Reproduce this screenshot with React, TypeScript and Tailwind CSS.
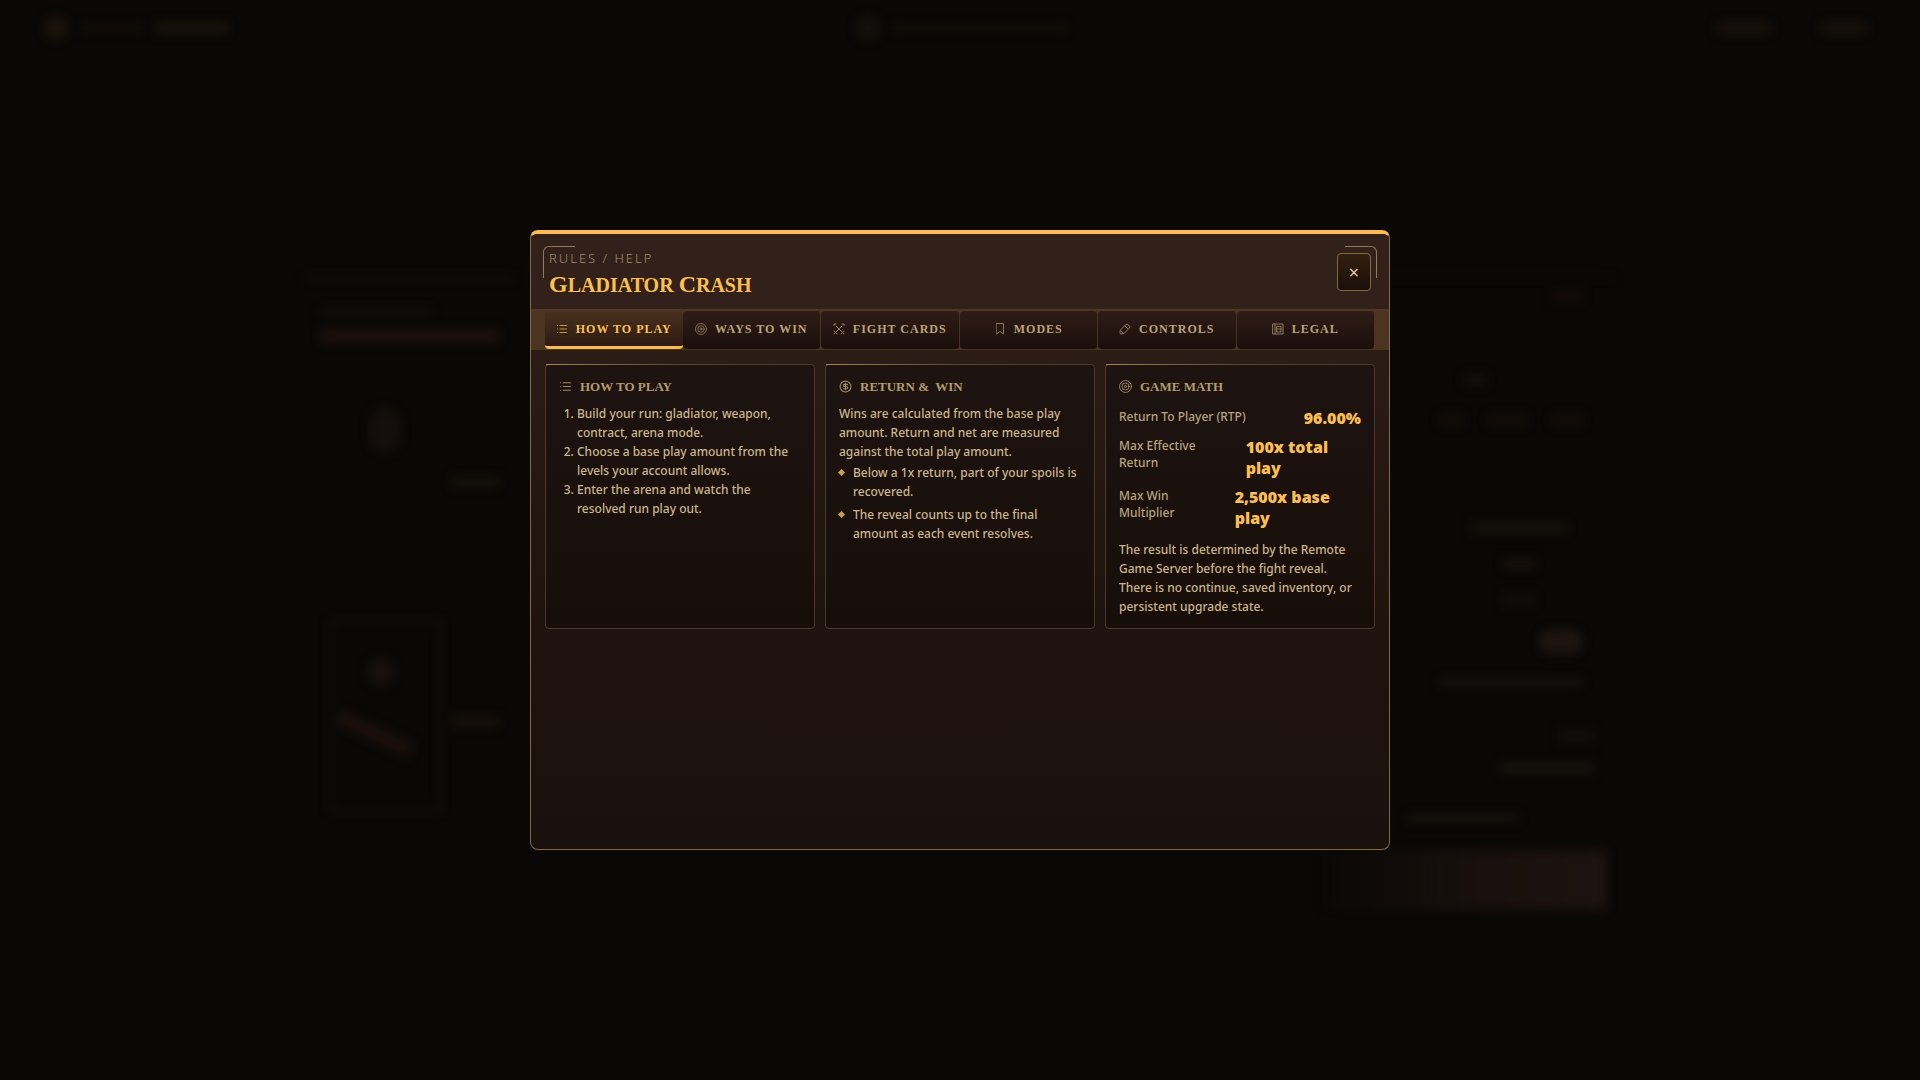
import { type ReactNode, useState } from "react";
import { CircleDollarSign, List } from "lucide-react";
import clsx from "clsx";

type IconProps = { size?: number; strokeWidth?: number; className?: string };
type IconType = (props: IconProps) => ReactNode;

function Glyph({
  size = 14,
  strokeWidth = 2,
  className,
  children,
}: IconProps & { children: ReactNode }) {
  return (
    <svg
      width={size}
      height={size}
      viewBox="0 0 24 24"
      fill="none"
      stroke="currentColor"
      strokeWidth={strokeWidth}
      strokeLinecap="round"
      strokeLinejoin="round"
      className={className}
      aria-hidden="true"
    >
      {children}
    </svg>
  );
}

const ListIcon: IconType = (props) => <List {...props} />;
const CoinIcon: IconType = (props) => <CircleDollarSign {...props} />;

const TargetIcon: IconType = (props) => (
  <Glyph {...props} strokeWidth={1.7}>
    <circle cx="12" cy="12" r="11" />
    <circle cx="12" cy="12" r="6.5" />
    <circle cx="12" cy="12" r="2" />
  </Glyph>
);

const CrossedIcon: IconType = (props) => (
  <Glyph {...props}>
    <path d="M6 6l12 12M18 6L6 18" />
    <path d="M2 5V2h4M18 2h4v3M2 16l6 6M22 16l-6 6M2 22l3-3M22 22l-3-3" />
  </Glyph>
);

const BookmarkIcon: IconType = (props) => (
  <Glyph {...props}>
    <path d="M5 1h14v21l-7-5-7 5z" />
  </Glyph>
);

const PencilIcon: IconType = (props) => (
  <Glyph {...props}>
    <path d="M3 14L13 4l3-2 6 5-2 4L10 21l-7 1-1-3z" />
    <path d="M12 6l6 6M3 15l6 6" />
  </Glyph>
);

const LegalIcon: IconType = (props) => (
  <Glyph {...props}>
    <path d="M2 2h20v20H2zM6 2v20M10 7h8v11h-8zM10 12h8" />
  </Glyph>
);

const TABS: { label: string; icon: IconType }[] = [
  { label: "How to play", icon: ListIcon },
  { label: "Ways to win", icon: TargetIcon },
  { label: "Fight cards", icon: CrossedIcon },
  { label: "Modes", icon: BookmarkIcon },
  { label: "Controls", icon: PencilIcon },
  { label: "Legal", icon: LegalIcon },
];

const MATH = [
  { label: "Return To Player (RTP)", value: "96.00%" },
  { label: "Max Effective Return", value: "100x total play" },
  { label: "Max Win Multiplier", value: "2,500x base play" },
];

const serif = "font-['Liberation_Serif',serif]";

function Panel({
  icon: Icon,
  title,
  children,
}: {
  icon: IconType;
  title: string;
  children: ReactNode;
}) {
  return (
    <section className="relative rounded border border-[#49392a] bg-linear-to-b from-[#1d1310] to-[#170d09] px-[13px] pb-3">
      <span className="absolute inset-x-0 -top-px h-px bg-linear-to-r from-[#a88345] via-[#5a452b] to-transparent" />
      <h2
        className={clsx(
          "flex h-[39px] items-center gap-2 pt-1 text-[13px] font-bold whitespace-pre text-[#b39b6c] uppercase",
          serif,
        )}
      >
        <Icon size={13} strokeWidth={2} className="text-[#a08a62]" />
        {title}
      </h2>
      {children}
    </section>
  );
}

// The game screen that stays dimmed and out of focus behind the dialog.
function Backdrop() {
  return (
    <div aria-hidden="true" className="absolute inset-0 overflow-hidden blur-[5px]">
      <div className="flex h-14 items-center justify-between px-11">
        <div className="flex items-center gap-3">
          <span className="size-6 rounded-full bg-[#1c120a]" />
          <span className="h-2 w-16 bg-[#120d08]" />
          <span className="h-3 w-18 bg-[#1a120a]" />
        </div>
        <div className="flex items-center gap-3 pr-5">
          <span className="size-6 rounded-full bg-[#15100b]" />
          <span className="h-2 w-44 bg-[#110d08]" />
        </div>
        <div className="flex items-center gap-12 pr-2">
          <span className="h-3 w-14 bg-[#17100b]" />
          <span className="h-3 w-12 bg-[#17100b]" />
        </div>
      </div>
      <div className="mx-auto mt-[220px] flex max-w-[1310px] justify-between">
        <div className="w-[210px] border-t-4 border-[#120d08] px-4 pt-7">
          <div className="h-2 w-28 bg-[#130d09]" />
          <div className="mt-3 h-4 w-full bg-[#1a0f0b]" />
          <div className="mt-16 ml-12 h-11 w-8 rounded-full bg-[#140f0c]" />
          <div className="mt-6 ml-auto h-3 w-12 bg-[#15100c]" />
          <div className="mt-33 ml-2 h-48 w-28 border-2 border-[#15120a] pt-9 pl-9">
            <div className="size-7 rounded-full bg-[#17100d]" />
            <div className="mt-10 -ml-8 h-4 w-20 rotate-25 bg-[#1a100c]" />
          </div>
          <div className="-mt-24 ml-auto h-3 w-12 bg-[#17100c]" />
        </div>
        <div className="flex w-[290px] flex-col items-end border-t-2 border-[#0e0b07] pt-3 pr-8">
          <div className="h-3 w-8 bg-[#120a08]" />
          <div className="mt-18 mr-24 h-3 w-6 bg-[#120e0b]" />
          <div className="mt-7 flex gap-6">
            <span className="h-3 w-6 bg-[#120d0a]" />
            <span className="h-3 w-10 bg-[#120d0a]" />
            <span className="h-3 w-8 bg-[#120d0a]" />
          </div>
          <div className="mt-24 mr-4 h-3 w-24 bg-[#14100c]" />
          <div className="mt-6 mr-12 h-3 w-8 bg-[#15100c]" />
          <div className="mt-6 mr-12 h-3 w-8 bg-[#120d0a]" />
          <div className="mt-6 h-6 w-11 rounded-full bg-[#1e1512]" />
          <div className="mt-6 h-2 w-36 bg-[#17110e]" />
          <div className="mt-11 -mr-3 h-3 w-9 bg-[#130e0c]" />
          <div className="mt-5 -mr-3 h-3 w-24 bg-[#15100d]" />
          <div className="mt-10 mr-16 h-2 w-28 bg-[#15100d]" />
          <div className="mt-7 -mr-6 h-15 w-[290px] bg-linear-to-r from-transparent via-[#180f0c] to-[#1d130f]" />
        </div>
      </div>
    </div>
  );
}

export default function App() {
  const [active, setActive] = useState("How to play");

  return (
    <div className="relative min-h-screen overflow-hidden bg-[#090806] font-['Noto_Sans',sans-serif]">
      <Backdrop />
      <div className="relative flex min-h-screen items-center justify-center">
        <div
          role="dialog"
          aria-labelledby="rules-title"
          className="flex min-h-[620px] w-full max-w-[860px] flex-col overflow-hidden rounded-lg border border-t-4 border-[#846a3a] border-t-[#fdbb47] bg-linear-to-b from-[#33211a] via-[#20150f] to-[#1a100d]"
        >
          <header className="relative flex h-[77px] items-start justify-between border-b-2 border-[#4e3823] bg-[#31211a] px-[18px] pt-[14px]">
            <span className="absolute top-3 left-3 size-8 rounded-tl-md border-t border-l border-[#937a50]" />
            <span className="absolute top-3 right-3 size-8 rounded-tr-md border-t border-r border-[#937a50]" />
            <div>
              <p className="text-[13px] leading-5 font-light tracking-[2px] text-[#a38d68] uppercase">
                Rules / Help
              </p>
              <h1
                id="rules-title"
                className={clsx(
                  "flex gap-[5px] text-xl leading-6 font-bold text-[#fdc04e] uppercase",
                  serif,
                )}
              >
                <span className="block first-letter:text-2xl">Gladiator</span>{" "}
                <span className="block first-letter:text-2xl">Crash</span>
              </h1>
            </div>
            <button
              type="button"
              aria-label="Close"
              className="mt-[5px] flex h-[38px] w-[34px] items-center justify-center rounded border border-[#846a3f] bg-linear-to-b from-[#34200f] to-[#1b0f0b] text-lg text-[#e3cfa1]"
            >
              ×
            </button>
          </header>

          <nav className="flex h-[39px] border-b border-[#49341f] bg-[#4b3420] px-[14px]">
            {TABS.map(({ label, icon: Icon }) => (
              <button
                type="button"
                key={label}
                onClick={() => setActive(label)}
                className={clsx(
                  "flex flex-1 items-center justify-center gap-2 rounded-sm text-xs font-bold tracking-[1px] whitespace-nowrap uppercase",
                  serif,
                  active === label
                    ? "border-b-3 border-[#fdbb47] bg-linear-to-b from-[#49311e] to-[#2d1b12] text-[#fdc253]"
                    : "border-r border-[#49341f] bg-linear-to-b from-[#2f1c17] to-[#1b0f0b] pb-[3px] text-[#b9a478]",
                )}
              >
                <Icon size={12} strokeWidth={2} className="opacity-70" />
                {label}
              </button>
            ))}
          </nav>

          <div className="grid grid-cols-3 gap-[10px] px-[14px] pt-[14px] text-xs leading-[19px] font-medium text-[#cbb68c]">
            <Panel icon={ListIcon} title="How to play">
              <ol className="list-decimal pl-[18px]">
                <li>Build your run: gladiator, weapon, contract, arena mode.</li>
                <li>Choose a base play amount from the levels your account allows.</li>
                <li>Enter the arena and watch the resolved run play out.</li>
              </ol>
            </Panel>

            <Panel icon={CoinIcon} title={"Return &  Win"}>
              <p>
                Wins are calculated from the base play amount. Return and net are
                measured against the total play amount.
              </p>
              <ul className="mt-[2px] space-y-1">
                {[
                  "Below a 1x return, part of your spoils is recovered.",
                  "The reveal counts up to the final amount as each event resolves.",
                ].map((text) => (
                  <li key={text} className="flex gap-[9px]">
                    <span className="mt-[7px] size-[5px] shrink-0 rotate-45 bg-[#c99f4e]" />
                    {text}
                  </li>
                ))}
              </ul>
            </Panel>

            <Panel icon={TargetIcon} title="Game math">
              <dl>
                {MATH.map((row) => (
                  <div key={row.label} className="flex justify-between gap-[14px] py-1">
                    <dt className="leading-[17px] text-[#b7a47f]">{row.label}</dt>
                    <dd className="text-base leading-[21px] font-black text-[#fdc04e]">
                      {row.value}
                    </dd>
                  </div>
                ))}
              </dl>
              <p className="mt-[7px]">
                The result is determined by the Remote Game Server before the fight
                reveal. There is no continue, saved inventory, or persistent upgrade
                state.
              </p>
            </Panel>
          </div>
        </div>
      </div>
    </div>
  );
}
